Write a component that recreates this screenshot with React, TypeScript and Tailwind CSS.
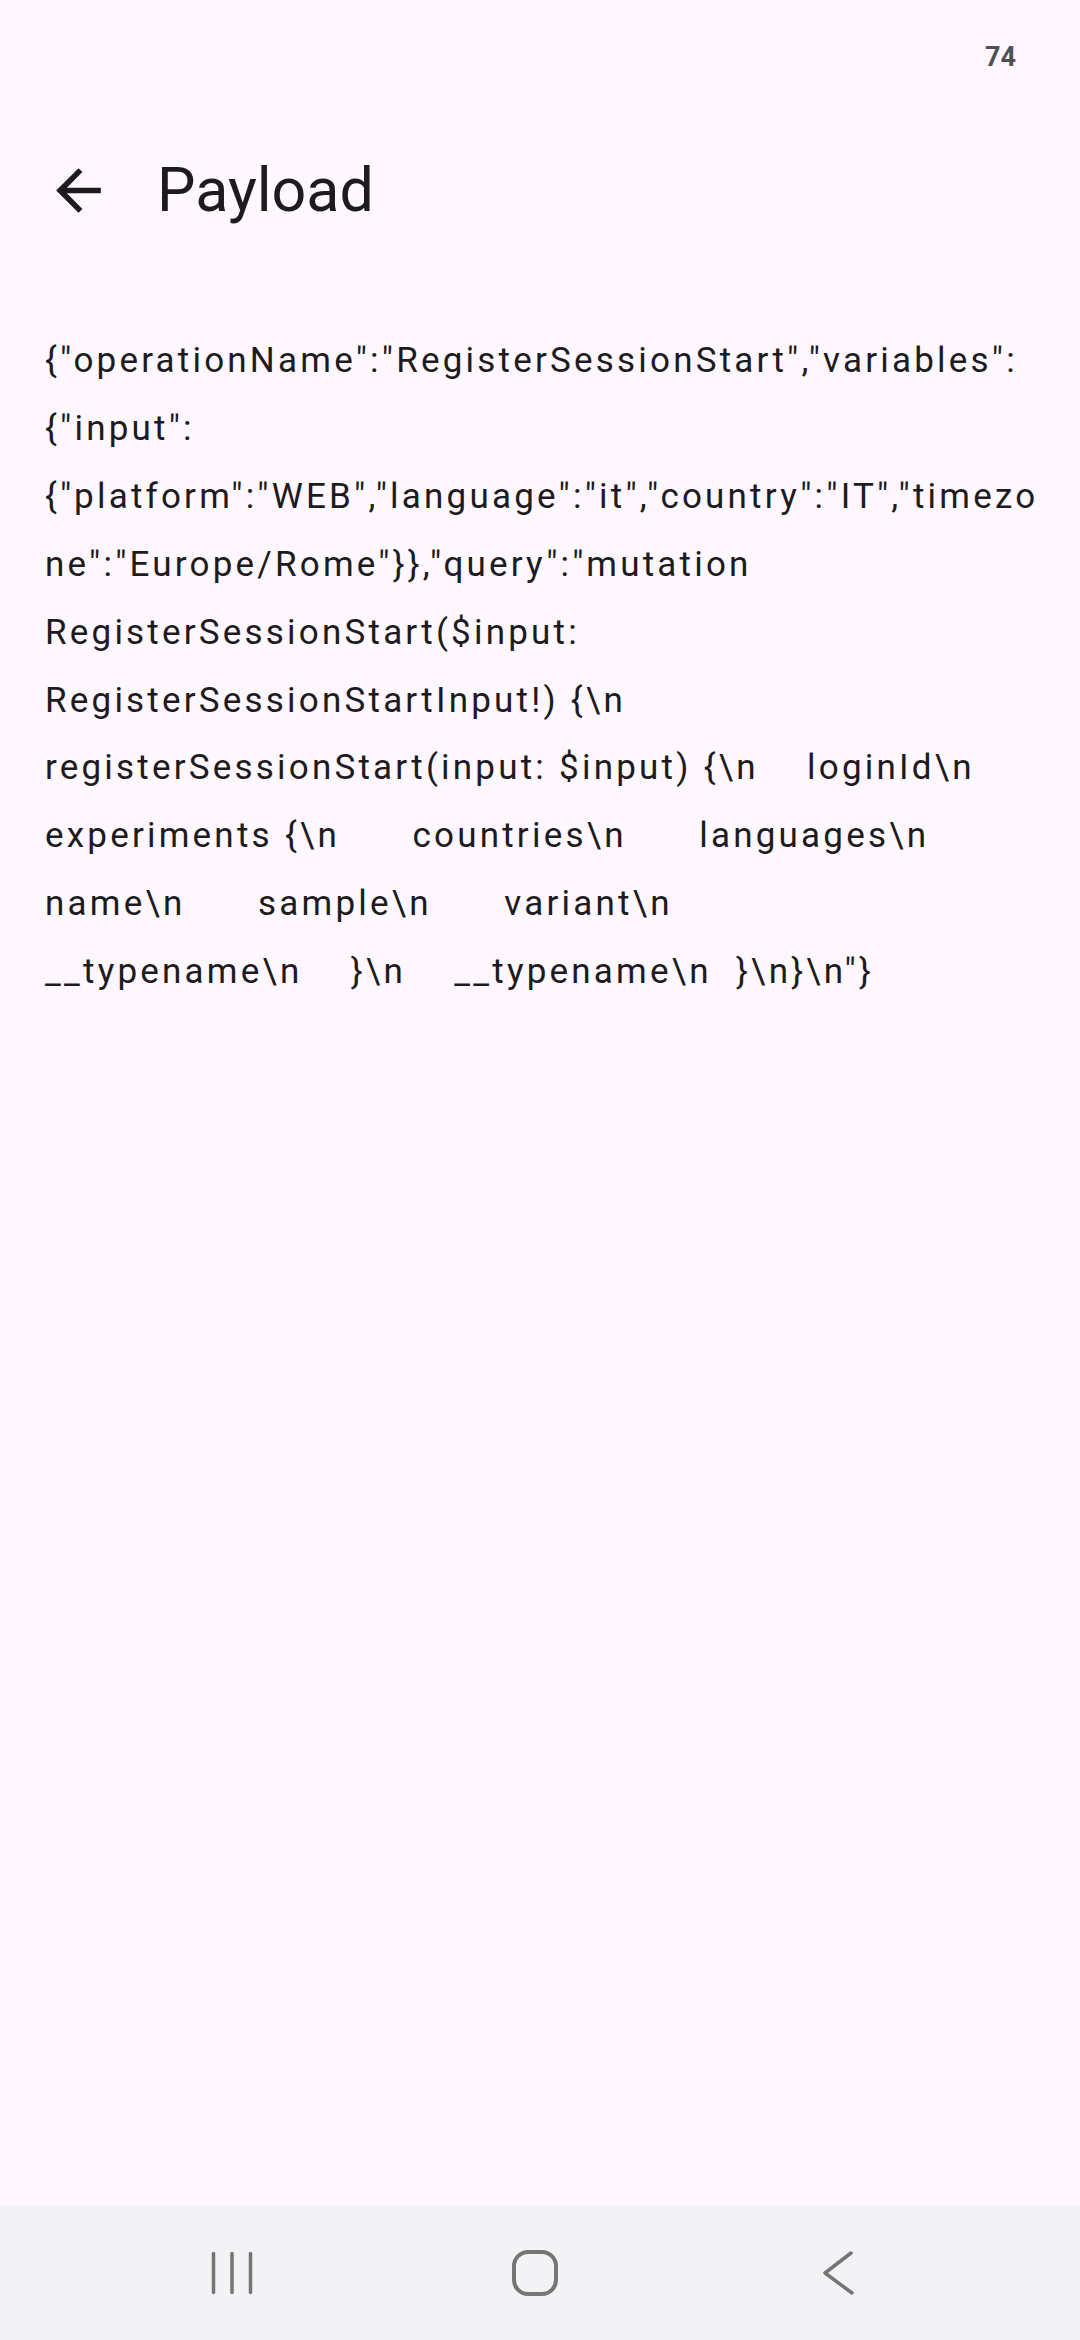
import React from "react";

const lines = [
  '{"operationName":"RegisterSessionStart","variables":',
  '{"input":',
  '{"platform":"WEB","language":"it","country":"IT","timezo',
  'ne":"Europe/Rome"}},"query":"mutation',
  "RegisterSessionStart($input:",
  "RegisterSessionStartInput!) {\\n",
  "registerSessionStart(input: $input) {\\n    loginId\\n",
  "experiments {\\n      countries\\n      languages\\n",
  "name\\n      sample\\n      variant\\n",
  '__typename\\n    }\\n    __typename\\n  }\\n}\\n"}',
];

export default function App() {
  return (
    <div
      className="w-full h-[2340px] bg-[#fef7ff] flex flex-col overflow-hidden"
      style={{ fontFamily: "Roboto, 'Noto Sans', sans-serif" }}
    >
      {/* status bar */}
      <div className="h-[110px] flex justify-end pr-[64px] pt-[41px]">
        <span className="text-[27px] leading-[32px] font-bold text-[#505055]">74</span>
      </div>

      {/* top app bar */}
      <div className="h-[160px] flex items-center pl-[45px]">
        <svg width="67" height="67" viewBox="0 0 24 24" className="shrink-0">
          <path
            d="M20 11H7.83l5.59-5.59L12 4l-8 8 8 8 1.41-1.41L7.83 13H20v-2z"
            fill="#1d1b20"
          />
        </svg>
        <span className="ml-[45px] text-[61px] leading-[72px] text-[#1d1b20]">Payload</span>
      </div>

      {/* body */}
      <div className="flex-1 pt-[57px] px-[45px]">
        {lines.map((l, i) => (
          <div
            key={i}
            className="whitespace-pre text-[35px] leading-[67.9px] tracking-[3.2px] [word-spacing:0.2px] text-[#1d1b20]"
          >
            {l}
          </div>
        ))}
      </div>

      {/* nav bar */}
      <div className="h-[135px] bg-[#f3f2f5] flex items-center justify-center pr-[10px]">
        <div className="w-[303px] flex justify-center">
          <svg width="46" height="46" viewBox="0 0 46 46">
            <g stroke="#757575" strokeWidth="3.5" strokeLinecap="round">
              <line x1="4.5" y1="3.5" x2="4.5" y2="42.5" />
              <line x1="23" y1="3.5" x2="23" y2="42.5" />
              <line x1="41.5" y1="3.5" x2="41.5" y2="42.5" />
            </g>
          </svg>
        </div>
        <div className="w-[303px] flex justify-center">
          <svg width="46" height="46" viewBox="0 0 46 46">
            <rect x="2" y="2" width="42" height="42" rx="14" fill="none" stroke="#757575" strokeWidth="4" />
          </svg>
        </div>
        <div className="w-[303px] flex justify-center">
          <svg width="46" height="46" viewBox="0 0 46 46">
            <polyline
              points="36,3 10,23 37,43"
              fill="none"
              stroke="#757575"
              strokeWidth="3.5"
              strokeLinecap="round"
              strokeLinejoin="round"
            />
          </svg>
        </div>
      </div>
    </div>
  );
}
